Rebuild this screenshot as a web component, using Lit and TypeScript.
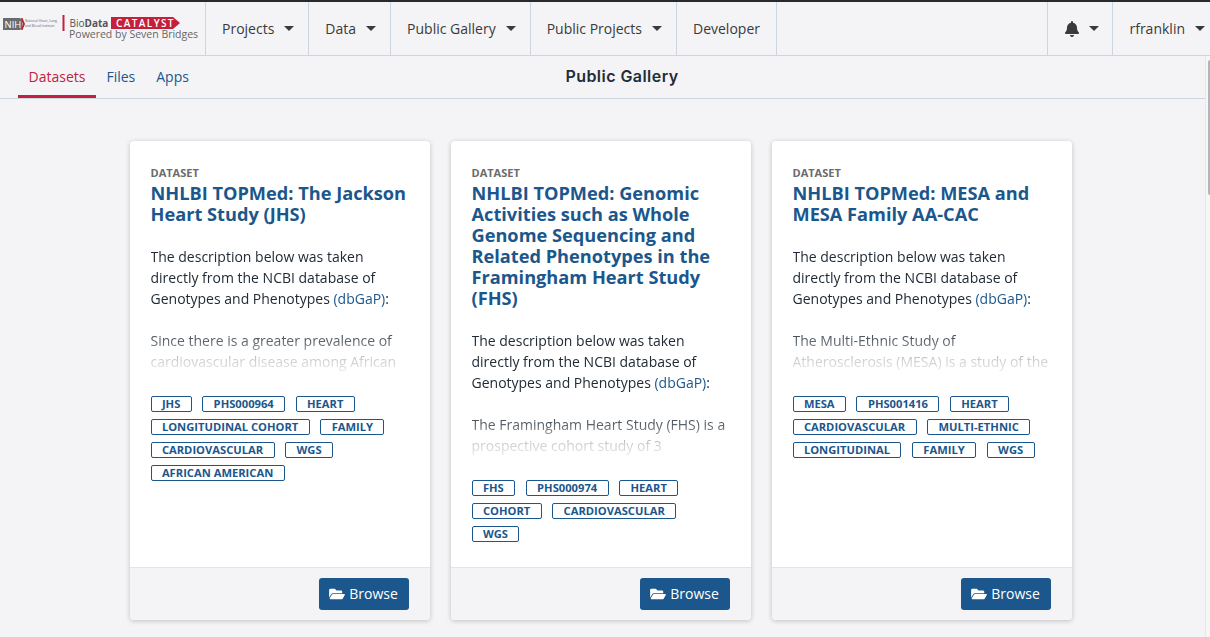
import { LitElement, html, css, svg } from "lit";
import { customElement } from "lit/decorators.js";

interface Card { title: string; para: string; tags: string[]; }

const CARDS: Card[] = [
  {
    title: "NHLBI TOPMed: The Jackson Heart Study (JHS)",
    para: "Since there is a greater prevalence of cardiovascular disease among African",
    tags: ["JHS", "PHS000964", "HEART", "LONGITUDINAL COHORT", "FAMILY", "CARDIOVASCULAR", "WGS", "AFRICAN AMERICAN"],
  },
  {
    title: "NHLBI TOPMed: Genomic Activities such as Whole Genome Sequencing and Related Phenotypes in the Framingham Heart Study (FHS)",
    para: "The Framingham Heart Study (FHS) is a prospective cohort study of 3",
    tags: ["FHS", "PHS000974", "HEART", "COHORT", "CARDIOVASCULAR", "WGS"],
  },
  {
    title: "NHLBI TOPMed: MESA and MESA Family AA-CAC",
    para: "The Multi-Ethnic Study of Atherosclerosis (MESA) is a study of the",
    tags: ["MESA", "PHS001416", "HEART", "CARDIOVASCULAR", "MULTI-ETHNIC", "LONGITUDINAL", "FAMILY", "WGS"],
  },
];

const caret = html`<span class="caret"></span>`;

const logo = svg`
  <svg class="logo" width="200" height="36" viewBox="0 0 200 36" aria-hidden="true">
    <path d="M3 12h17l2.500 2v8L20 24H3z" fill="#6a6b6d"/>
    <path d="M21 12h1.500l2.500 6-2.500 6H21l2-6z" fill="#b9203a"/>
    <text x="4.500" y="21.800" font-family="'Open Sans',sans-serif" font-size="9.500" fill="#fff">NIH</text>
    <text x="25" y="16" font-family="'Open Sans',sans-serif" font-size="3.300" fill="#666">National Heart, Lung,</text>
    <text x="25" y="20.500" font-family="'Open Sans',sans-serif" font-size="3.300" fill="#666">and Blood Institute</text>
    <rect x="62.500" y="9" width="2" height="16" fill="#c4203c"/>
    <text x="69.500" y="21" font-family="'Open Sans',sans-serif" font-size="10" fill="#555">Bio<tspan font-weight="700">Data</tspan></text>
    <path d="M111 11h62l7 6-7 6h-62z" fill="#c4203c"/>
    <text x="116" y="20.700" font-family="'Open Sans',sans-serif" font-size="10" font-weight="600" letter-spacing="1.400" fill="#fff">CATALYST</text>
    <text x="69" y="32" font-family="'Open Sans',sans-serif" font-size="10.500" fill="#666">Powered by Seven Bridges</text>
  </svg>`;

@customElement("app-root")
export class AppRoot extends LitElement {
  static styles = css`
    :host {
      display: block;
      height: 637px;
      overflow: hidden;
      position: relative;
      background: #f4f4f6;
      font-family: "Open Sans", sans-serif;
      font-size: 14px;
      color: #212b36;
    }
    .nav {
      display: flex;
      height: 53px;
      border-top: 2px solid #2a2a2c;
      border-bottom: 1px solid #ccd6e0;
      color: #3a3a3c;
    }
    .brand {
      width: 206px;
      flex: none;
      border-right: 1px solid #ccd6e0;
      display: flex;
      align-items: flex-start;
      padding-top: 4px;
      box-sizing: border-box;
    }
    .logo { display: block; overflow: visible; }
    .item {
      display: flex;
      align-items: center;
      padding: 0 16px;
      gap: 9px;
      border-right: 1px solid #ccd6e0;
      white-space: nowrap;
    }
    .item.drop { padding-right: 14px; }
    .spacer { flex: 1; }
    .item.left { border-left: 1px solid #ccd6e0; padding-left: 17px; padding-right: 13px; }
    .item.last { border-right: none; padding-left: 16px; padding-right: 5px; }
    .caret {
      width: 0;
      height: 0;
      border-left: 5px solid transparent;
      border-right: 5px solid transparent;
      border-top: 5px solid #3a3a3c;
      margin-left: 1px;
    }
    .sub {
      width: 1205px;
      height: 42px;
      border-bottom: 1px solid #ccd6e0;
      display: grid;
      grid-template-columns: 1fr auto 1fr;
      align-items: stretch;
    }
    .tabs { display: flex; padding-left: 18px; }
    .tab {
      display: flex;
      align-items: center;
      padding: 1px 10.500px 0;
      color: #1b578c;
      border-bottom: 3px solid transparent;
      height: 42px;
      box-sizing: border-box;
    }
    .tab.on { color: #c4203c; border-bottom-color: #c4203c; }
    .heading {
      font-family: Inter, "Open Sans", sans-serif;
      font-size: 16px;
      font-weight: 600;
      letter-spacing: 0.45px;
      align-self: center;
      color: #242c35;
      padding: 0 0 2px 39px;
    }
    .cards {
      display: flex;
      gap: 21px;
      padding: 42px 0 0 130px;
      align-items: flex-start;
    }
    .card {
      width: 300px;
      height: 479px;
      background: #fff;
      border-radius: 4px;
      box-shadow: 0 1px 5px rgba(0, 0, 0, 0.22);
      display: flex;
      flex-direction: column;
      overflow: hidden;
      flex: none;
    }
    .body { flex: 1; padding: 25px 21px 0 20.500px; }
    .kicker { font-size: 11px; font-weight: 700; color: #6b6b6b; line-height: 14px; }
    .title {
      font-size: 18.200px;
      font-weight: 700;
      line-height: 21px;
      color: #1b578c;
      margin: 3px 0 0;
    }
    .desc {
      margin-top: 21px;
      line-height: 21px;
      height: 126px;
      -webkit-mask-image: linear-gradient(to bottom, #000 62%, rgba(0,0,0,0.72) 76%, rgba(0,0,0,0.24) 90%, rgba(0,0,0,0.1) 100%);
      mask-image: linear-gradient(to bottom, #000 62%, rgba(0,0,0,0.72) 76%, rgba(0,0,0,0.24) 90%, rgba(0,0,0,0.1) 100%);
    }
    .desc p { margin: 0 0 21px; }
    .desc p:last-child { margin-bottom: 0; }
    .desc a { color: #1b578c; text-decoration: none; }
    .tags { display: flex; flex-wrap: wrap; gap: 7px 10.500px; margin-top: 24px; }
    .tag {
      height: 16px;
      box-sizing: border-box;
      border: 1px solid #1b578c;
      border-radius: 2px;
      padding: 0 10.400px;
      font-size: 11.200px;
      font-weight: 700;
      line-height: 14px;
      color: #1b578c;
      white-space: nowrap;
    }
    .foot {
      height: 53px;
      box-sizing: border-box;
      background: #f4f4f6;
      border-top: 1px solid #e4e4e8;
      display: flex;
      justify-content: flex-end;
      align-items: center;
      padding-right: 21px;
    }
    .btn {
      width: 90px;
      height: 32px;
      background: #1b578c;
      color: #fff;
      border-radius: 3px;
      display: flex;
      align-items: center;
      justify-content: center;
      gap: 4px;
      padding: 0 1px 1px 0;
      box-sizing: border-box;
    }
    .scroll {
      position: absolute;
      right: 0;
      top: 60px;
      width: 2px;
      height: 135px;
      background: #b4b4b6;
      border-radius: 2px 0 0 2px;
    }
    .track {
      position: absolute;
      right: 0;
      top: 56px;
      bottom: 0;
      width: 5px;
      background: #f6f6f7;
      border-left: 1px solid #e8e8ea;
      box-sizing: border-box;
    }
  `;

  render() {
    return html`
      <div class="nav">
        <div class="brand">${logo}</div>
        <div class="item drop">Projects ${caret}</div>
        <div class="item drop">Data ${caret}</div>
        <div class="item drop">Public Gallery ${caret}</div>
        <div class="item drop">Public Projects ${caret}</div>
        <div class="item">Developer</div>
        <div class="spacer"></div>
        <div class="item left">
          <svg width="14" height="16" viewBox="0 0 448 512" aria-hidden="true"><path fill="#3a3a3c" d="M224 512c35 0 64-29 64-64H160c0 35 29 64 64 64zm215-150c-19-21-56-52-56-154 0-78-54-140-127-155V32a32 32 0 1 0-64 0v21C119 68 65 130 65 208c0 102-37 133-56 154-6 6-9 14-9 22 0 16 13 32 32 32h384c19 0 32-16 32-32 0-8-3-16-9-22z"/></svg>
          ${caret}
        </div>
        <div class="item last">rfranklin ${caret}</div>
      </div>
      <div class="sub">
        <div class="tabs">
          <div class="tab on">Datasets</div>
          <div class="tab">Files</div>
          <div class="tab">Apps</div>
        </div>
        <div class="heading">Public Gallery</div>
        <div></div>
      </div>
      <div class="cards">
        ${CARDS.map(
          (c) => html`
            <div class="card">
              <div class="body">
                <div class="kicker">DATASET</div>
                <h3 class="title">${c.title}</h3>
                <div class="desc">
                  <p>The description below was taken directly from the NCBI database of Genotypes and Phenotypes <a>(dbGaP)</a>:</p>
                  <p>${c.para}</p>
                </div>
                <div class="tags">${c.tags.map((t) => html`<span class="tag">${t}</span>`)}</div>
              </div>
              <div class="foot">
                <div class="btn">
                  <svg width="16" height="14" viewBox="0 0 576 512" aria-hidden="true"><path fill="#fff" d="M572.700 292.100l-72.400 124.100A64 64 0 0 1 445 448H45c-18.500 0-30-20.100-20.700-36.100l72.400-124.100A64 64 0 0 1 152 256h400c18.500 0 30 20.100 20.700 36.100zM152 224h328v-48a48 48 0 0 0-48-48H272l-64-64H48A48 48 0 0 0 0 112v278l69.100-118.400C86.200 242.300 118 224 152 224z"/></svg>
                  Browse
                </div>
              </div>
            </div>
          `
        )}
      </div>
      <div class="track"></div>
      <div class="scroll"></div>
    `;
  }
}
